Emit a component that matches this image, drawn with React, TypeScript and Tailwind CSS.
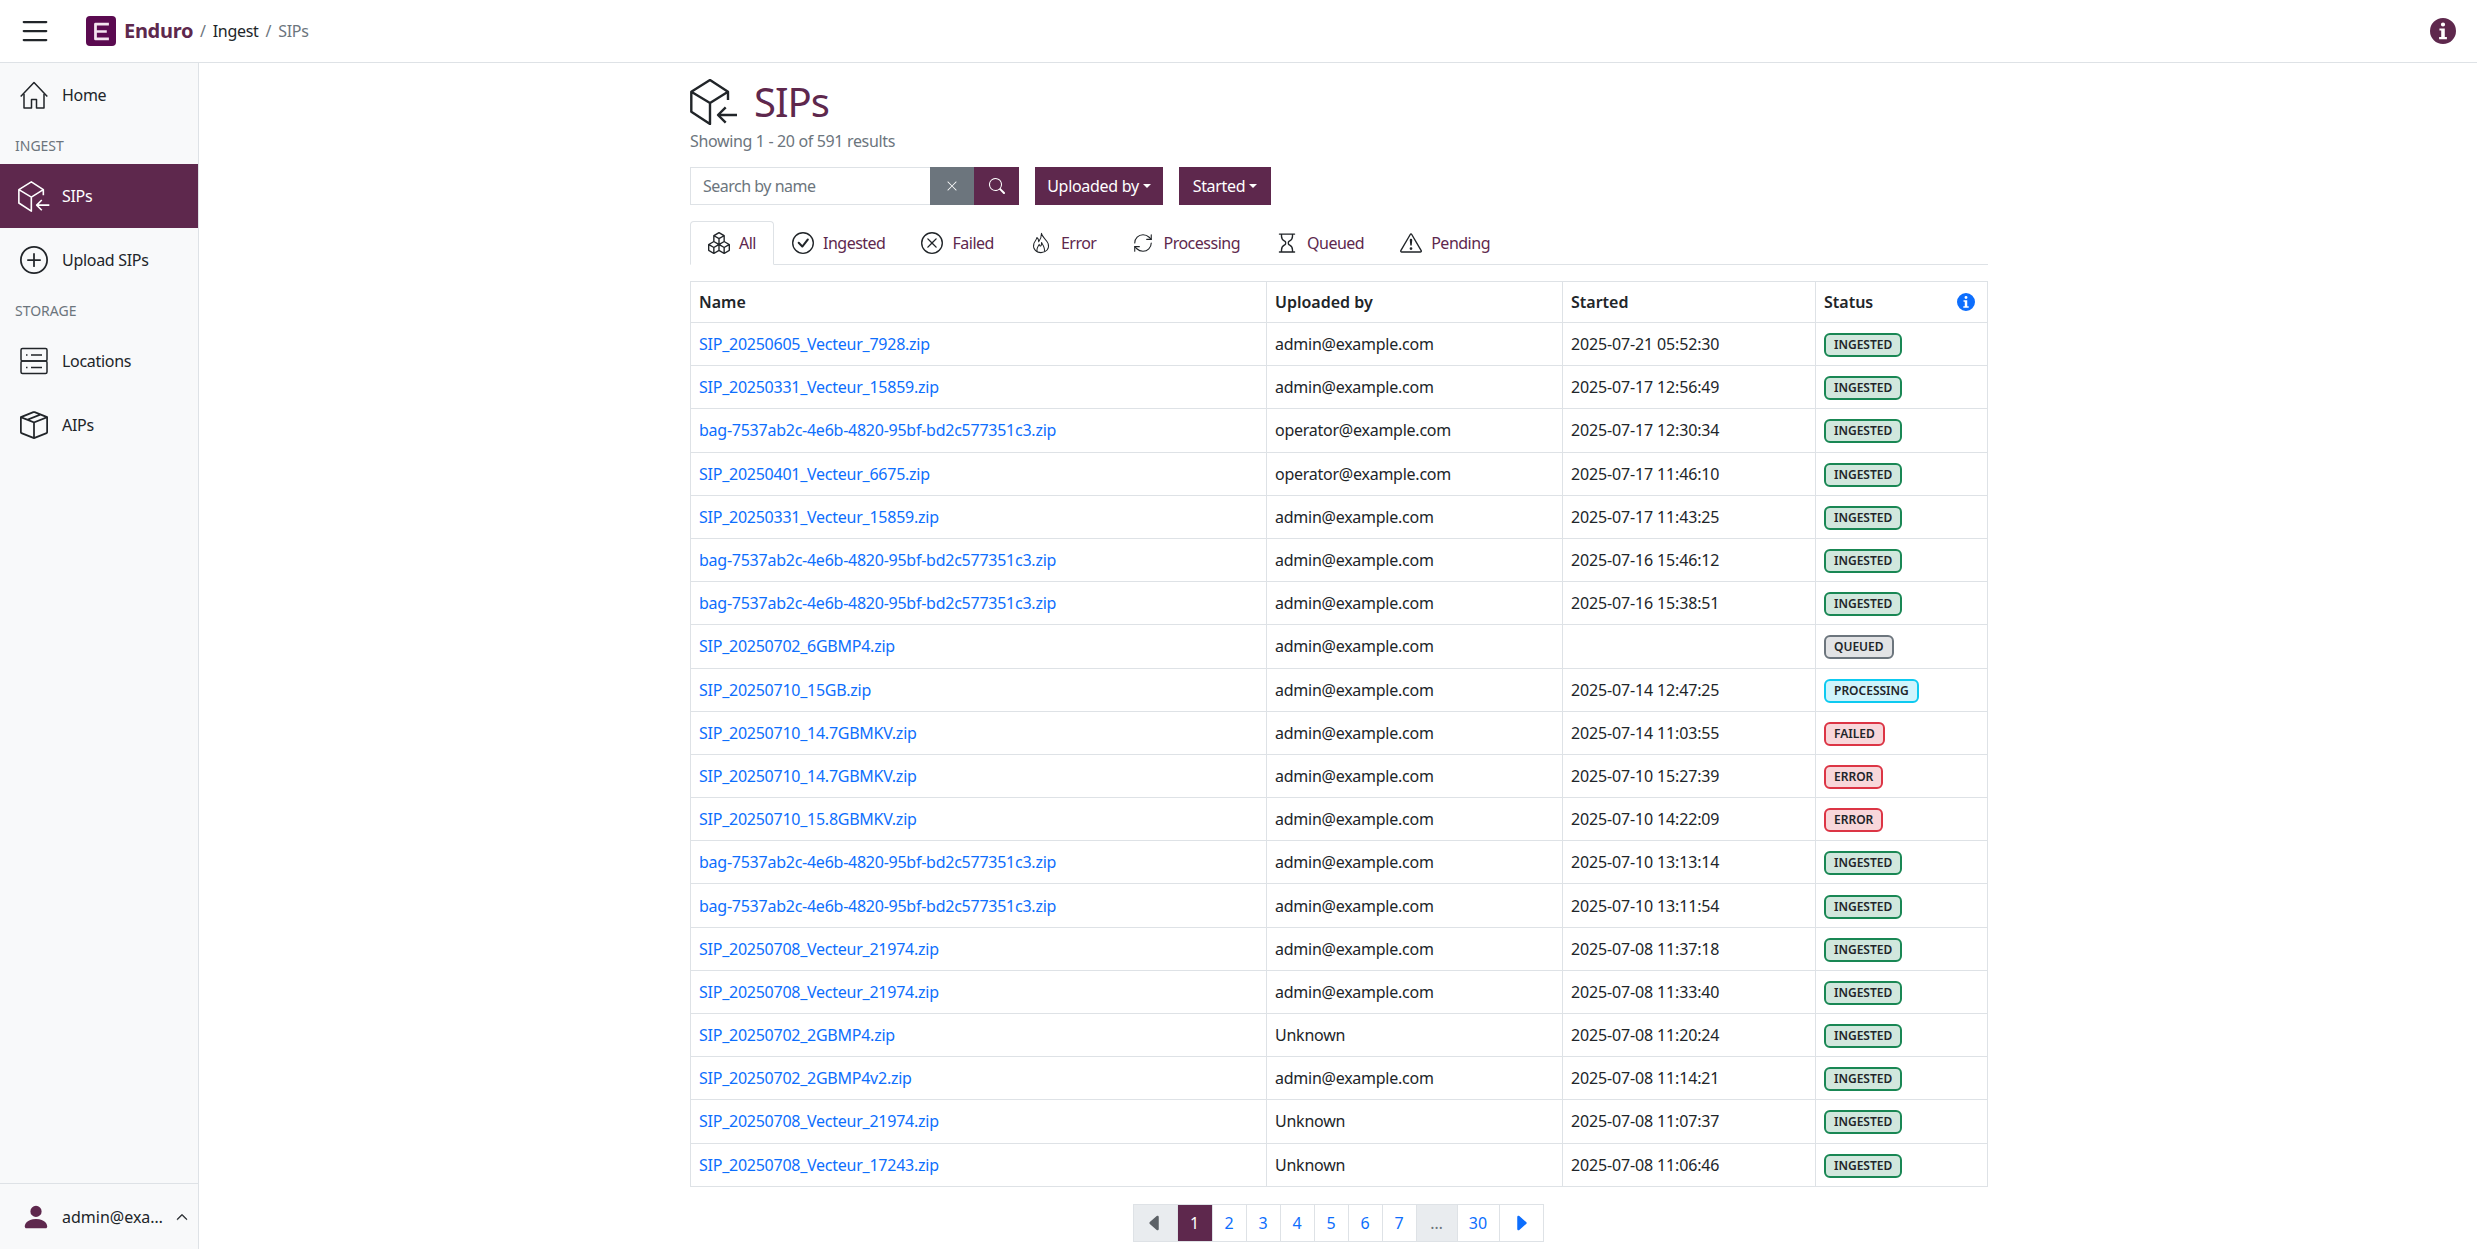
import {
  BsBoxes,
  BsBoxSeam,
  BsCaretLeftFill,
  BsCaretRightFill,
  BsCheckCircle,
  BsChevronUp,
  BsExclamationTriangle,
  BsHourglass,
  BsList,
  BsPersonFill,
  BsPlusCircle,
  BsSearch,
  BsXCircle,
  BsXLg,
} from 'react-icons/bs';
import { RefreshCw } from 'lucide-react';

const ADMIN = 'admin@example.com';
const OPERATOR = 'operator@example.com';
const BAG = 'bag-7537ab2c-4e6b-4820-95bf-bd2c577351c3.zip';

const rows = [
  ['SIP_20250605_Vecteur_7928.zip', ADMIN, '2025-07-21 05:52:30', 'INGESTED'],
  ['SIP_20250331_Vecteur_15859.zip', ADMIN, '2025-07-17 12:56:49', 'INGESTED'],
  [BAG, OPERATOR, '2025-07-17 12:30:34', 'INGESTED'],
  ['SIP_20250401_Vecteur_6675.zip', OPERATOR, '2025-07-17 11:46:10', 'INGESTED'],
  ['SIP_20250331_Vecteur_15859.zip', ADMIN, '2025-07-17 11:43:25', 'INGESTED'],
  [BAG, ADMIN, '2025-07-16 15:46:12', 'INGESTED'],
  [BAG, ADMIN, '2025-07-16 15:38:51', 'INGESTED'],
  ['SIP_20250702_6GBMP4.zip', ADMIN, '', 'QUEUED'],
  ['SIP_20250710_15GB.zip', ADMIN, '2025-07-14 12:47:25', 'PROCESSING'],
  ['SIP_20250710_14.7GBMKV.zip', ADMIN, '2025-07-14 11:03:55', 'FAILED'],
  ['SIP_20250710_14.7GBMKV.zip', ADMIN, '2025-07-10 15:27:39', 'ERROR'],
  ['SIP_20250710_15.8GBMKV.zip', ADMIN, '2025-07-10 14:22:09', 'ERROR'],
  [BAG, ADMIN, '2025-07-10 13:13:14', 'INGESTED'],
  [BAG, ADMIN, '2025-07-10 13:11:54', 'INGESTED'],
  ['SIP_20250708_Vecteur_21974.zip', ADMIN, '2025-07-08 11:37:18', 'INGESTED'],
  ['SIP_20250708_Vecteur_21974.zip', ADMIN, '2025-07-08 11:33:40', 'INGESTED'],
  ['SIP_20250702_2GBMP4.zip', 'Unknown', '2025-07-08 11:20:24', 'INGESTED'],
  ['SIP_20250702_2GBMP4v2.zip', ADMIN, '2025-07-08 11:14:21', 'INGESTED'],
  ['SIP_20250708_Vecteur_21974.zip', 'Unknown', '2025-07-08 11:07:37', 'INGESTED'],
  ['SIP_20250708_Vecteur_17243.zip', 'Unknown', '2025-07-08 11:06:46', 'INGESTED'],
];

const badgeStyles: Record<string, string> = {
  INGESTED: 'border-[#198754] bg-[#d1e7dd]',
  QUEUED: 'border-[#6c757d] bg-[#e2e3e5]',
  PROCESSING: 'border-[#0dcaf0] bg-[#cff4fc]',
  FAILED: 'border-[#dc3545] bg-[#f8d7da]',
  ERROR: 'border-[#dc3545] bg-[#f8d7da]',
};

function SipIcon({ className }: { className?: string }) {
  return (
    <svg viewBox="6 4 48 46" fill="none" stroke="currentColor" strokeWidth="2.400" strokeLinejoin="round" className={className}>
      <path d="M44 25v-8.300L26 5 7.300 16.700v20L26 49V28l18-11.300M7.300 16.700 26 28" />
      <path d="M53 40H34.500M41.700 32.300 34 40l7.700 7.700" />
    </svg>
  );
}

function HomeIcon({ className }: { className?: string }) {
  return (
    <svg viewBox="0 0 28 28" fill="none" stroke="currentColor" strokeWidth="1.500" strokeLinejoin="round" className={className}>
      <path d="M.7 15.500 14 1.500l13.300 14" />
      <path d="M4 13v14h7.500v-8.500h5V27H24V13" />
    </svg>
  );
}

function ServerIcon({ className }: { className?: string }) {
  return (
    <svg viewBox="0 0 28 28" fill="none" stroke="currentColor" strokeWidth="1.500" className={className}>
      <rect x="1" y="1.500" width="26" height="12.500" rx="1.500" />
      <rect x="1" y="14" width="26" height="12.500" rx="1.500" />
      <path d="M6 8h1.500M11 8h11M6 20.500h1.500M11 20.500h11" />
    </svg>
  );
}

function FireIcon({ className }: { className?: string }) {
  return (
    <svg viewBox="0 0 24 24" fill="none" stroke="currentColor" strokeWidth="1.100" strokeLinejoin="round" className={className}>
      <path d="M12.500 1.500c.5 4 5.500 6.500 7.300 11.200C21.600 18 17.500 22.500 12 22.500S2.500 18 4.300 12.500C5.100 10 7 9 7.500 6c1.500 1 2 2.800 2 4.500 1.800-2.200 3-5.500 3-9z" />
      <path d="M8 21.500c-1.500-3 .6-5.500 2-8 .5 1.500 1.200 2.500 2 1.500.6-1 .6-2.200.6-3.500 1.500 2.500 4.200 6 3 10" />
    </svg>
  );
}

function InfoIcon({ className }: { className?: string }) {
  return (
    <svg viewBox="0 0 16 16" fill="currentColor" className={className}>
      <path
        fillRule="evenodd"
        d="M8 0a8 8 0 1 1 0 16A8 8 0 0 1 8 0zM8 2.700a1.300 1.300 0 1 0 0 2.600 1.300 1.300 0 0 0 0-2.600zM5.800 6.400v1.300h1.100v4H5.600V13h4.800v-1.300H9.100V6.400z"
      />
    </svg>
  );
}

function Logo() {
  return (
    <div className="flex h-[30px] w-[30px] items-center justify-center rounded-[4px] bg-[#5a0a50]">
      <svg viewBox="0 0 16 18" className="h-[19px] w-[17px]" fill="none" stroke="#f3e4ef" strokeWidth="2.600" strokeLinejoin="round">
        <path d="M15 2H2.300v14H15M2.300 9H13" />
      </svg>
    </div>
  );
}

function NavItem({ icon, label, active }: { icon: React.ReactNode; label: string; active?: boolean }) {
  return (
    <div className={`flex h-16 items-center tracking-[-0.3px] ${active ? 'bg-[#5e284d] pl-[18px] text-white' : 'pl-5 text-[#212529]'}`}>
      <div className={`flex shrink-0 items-center ${active ? 'w-[44px]' : 'w-[42px]'}`}>{icon}</div>
      {label}
    </div>
  );
}

function NavHeading({ label }: { label: string }) {
  return <div className="flex h-[37px] items-center pl-[15px] text-sm text-[#6c757d]">{label}</div>;
}

function Tab({ icon, label, active }: { icon: React.ReactNode; label: string; active?: boolean }) {
  return (
    <div
      className={`-mb-px flex h-[44px] items-center gap-[9px] border px-[17px] tracking-[-0.5px] text-[#5e284d] ${
        active ? 'rounded-t-[4px] border-[#dee2e6] border-b-white bg-white' : 'border-transparent'
      }`}
    >
      <span className="text-[#212529]">{icon}</span>
      {label}
    </div>
  );
}

function PageLink({ label, width, className }: { label: React.ReactNode; width: string; className?: string }) {
  return (
    <div className={`-ml-px flex h-[38px] items-center justify-center border border-[#dee2e6] ${width} ${className ?? 'bg-white text-[#0d6efd]'}`}>
      {label}
    </div>
  );
}

export default function App() {
  return (
    <div className="flex h-[1249px] flex-col overflow-hidden bg-white font-['Noto_Sans',sans-serif] text-base text-[#212529]">
      <header className="flex h-[63px] shrink-0 items-center border-b border-[#dee2e6] pr-[21px]">
        <BsList className="ml-[17px] h-9 w-9 text-[#212529]" />
        <div className="ml-[33px] flex items-center tracking-[-0.3px]">
          <Logo />
          <span className="ml-2 text-xl font-bold text-[#5e284d]">Enduro</span>
          <span className="ml-[7px] text-[#6c757d]">/</span>
          <span className="ml-[7px]">Ingest</span>
          <span className="ml-[7px] text-[#6c757d]">/</span>
          <span className="ml-[7px] text-[#6c757d]">SIPs</span>
        </div>
        <InfoIcon className="ml-auto h-[26px] w-[26px] text-[#5e284d]" />
      </header>

      <div className="flex min-h-0 flex-1">
        <aside className="flex w-[199px] shrink-0 flex-col border-r border-[#dee2e6] bg-[#f8f9fa]">
          <NavItem icon={<HomeIcon className="h-7 w-7" />} label="Home" />
          <NavHeading label="INGEST" />
          <NavItem icon={<SipIcon className="h-[31px] w-8" />} label="SIPs" active />
          <NavItem icon={<BsPlusCircle className="h-7 w-7" />} label="Upload SIPs" />
          <NavHeading label="STORAGE" />
          <NavItem icon={<ServerIcon className="h-7 w-7" />} label="Locations" />
          <NavItem icon={<BsBoxSeam className="h-7 w-7" />} label="AIPs" />
          <div className="mt-auto flex h-[66px] items-center border-t border-[#dee2e6] pl-[21px]">
            <BsPersonFill className="h-[30px] w-[30px] text-[#5e284d]" />
            <span className="ml-[11px] w-[104px] truncate">{ADMIN}</span>
            <BsChevronUp className="ml-[10px] h-3 w-3" strokeWidth={1} />
          </div>
        </aside>

        <main className="min-w-0 flex-1 pl-[491px]">
          <div className="w-[1298px]">
            <div className="flex h-[66px] items-center pt-[11px]">
              <SipIcon className="h-[46px] w-[48px]" />
              <h1 className="ml-[16px] text-[40px] leading-none tracking-[-1px] text-[#5e284d]">SIPs</h1>
            </div>
            <div className="tracking-[-0.35px] text-[#6c757d]">Showing 1 - 20 of 591 results</div>

            <div className="mt-[14px] flex items-stretch">
              <div className="flex h-[38px] w-[240px] items-center border border-r-0 border-[#dee2e6] px-3 tracking-[-0.5px] text-[#6c757d]">Search by name</div>
              <button className="flex w-[44px] items-center justify-center bg-[#6c757d] text-white">
                <BsXLg className="h-3 w-3" />
              </button>
              <button className="flex w-[45px] items-center justify-center bg-[#5e284d] text-white">
                <BsSearch className="h-4 w-4" />
              </button>
              <button className="ml-4 flex w-[128px] items-center justify-center gap-1 bg-[#5e284d] tracking-[-0.3px] text-white">
                Uploaded by
                <span className="h-0 w-0 border-x-4 border-t-4 border-x-transparent border-t-white" />
              </button>
              <button className="ml-4 flex w-[92px] items-center justify-center gap-1 bg-[#5e284d] tracking-[-0.3px] text-white">
                Started
                <span className="h-0 w-0 border-x-4 border-t-4 border-x-transparent border-t-white" />
              </button>
            </div>

            <div className="mt-4 flex h-[44px] border-b border-[#dee2e6]">
              <Tab active icon={<BsBoxes className="h-[22px] w-[22px]" />} label="All" />
              <Tab icon={<BsCheckCircle className="h-[22px] w-[22px]" />} label="Ingested" />
              <Tab icon={<BsXCircle className="h-[22px] w-[22px]" />} label="Failed" />
              <Tab icon={<FireIcon className="h-[22px] w-[22px]" />} label="Error" />
              <Tab icon={<RefreshCw className="h-[22px] w-[22px]" strokeWidth={1.2} />} label="Processing" />
              <Tab icon={<BsHourglass className="h-[22px] w-[22px]" />} label="Queued" />
              <Tab icon={<BsExclamationTriangle className="h-[22px] w-[22px]" />} label="Pending" />
            </div>

            <table className="mt-4 w-full table-fixed border-collapse border border-[#dee2e6]">
              <colgroup>
                <col className="w-[576px]" />
                <col className="w-[296px]" />
                <col className="w-[253px]" />
                <col />
              </colgroup>
              <thead>
                <tr className="h-[41px]">
                  <th className="border border-[#dee2e6] px-2 text-left font-semibold">Name</th>
                  <th className="border border-[#dee2e6] px-2 text-left font-semibold">Uploaded by</th>
                  <th className="border border-[#dee2e6] px-2 text-left font-semibold">Started</th>
                  <th className="border border-[#dee2e6] pr-3 pl-2 text-left font-semibold">
                    <div className="flex items-center justify-between">
                      Status
                      <InfoIcon className="h-[18px] w-[18px] text-[#0d6efd]" />
                    </div>
                  </th>
                </tr>
              </thead>
              <tbody>
                {rows.map((row, i) => (
                  <tr key={i} className="h-[43.2px]">
                    <td className="border border-[#dee2e6] px-2 tracking-[-0.25px] text-[#0d6efd]">{row[0]}</td>
                    <td className="border border-[#dee2e6] px-2 tracking-[-0.25px]">{row[1]}</td>
                    <td className="border border-[#dee2e6] px-2 tracking-[-0.15px]">{row[2]}</td>
                    <td className="border border-[#dee2e6] px-2">
                      <span className={`inline-block rounded-[6px] border-2 px-[8px] py-[2px] text-xs leading-4 font-semibold ${badgeStyles[row[3]]}`}>
                        {row[3]}
                      </span>
                    </td>
                  </tr>
                ))}
              </tbody>
            </table>

            <div className="mt-[17px] flex justify-center">
              <div className="mr-[2px] flex pl-px">
                <PageLink label={<BsCaretLeftFill className="h-5 w-5" />} width="w-[45px]" className="bg-[#e9ecef] text-[#5c6166]" />
                <PageLink label="1" width="w-[36px]" className="border-[#5e284d] bg-[#5e284d] text-white" />
                <PageLink label="2" width="w-[35px]" />
                <PageLink label="3" width="w-[35px]" />
                <PageLink label="4" width="w-[35px]" />
                <PageLink label="5" width="w-[35px]" />
                <PageLink label="6" width="w-[35px]" />
                <PageLink label="7" width="w-[35px]" />
                <PageLink label="…" width="w-[42px]" className="bg-[#e9ecef] text-[#6c757d]" />
                <PageLink label="30" width="w-[43px]" />
                <PageLink label={<BsCaretRightFill className="h-5 w-5" />} width="w-[45px]" />
              </div>
            </div>
          </div>
        </main>
      </div>
    </div>
  );
}
